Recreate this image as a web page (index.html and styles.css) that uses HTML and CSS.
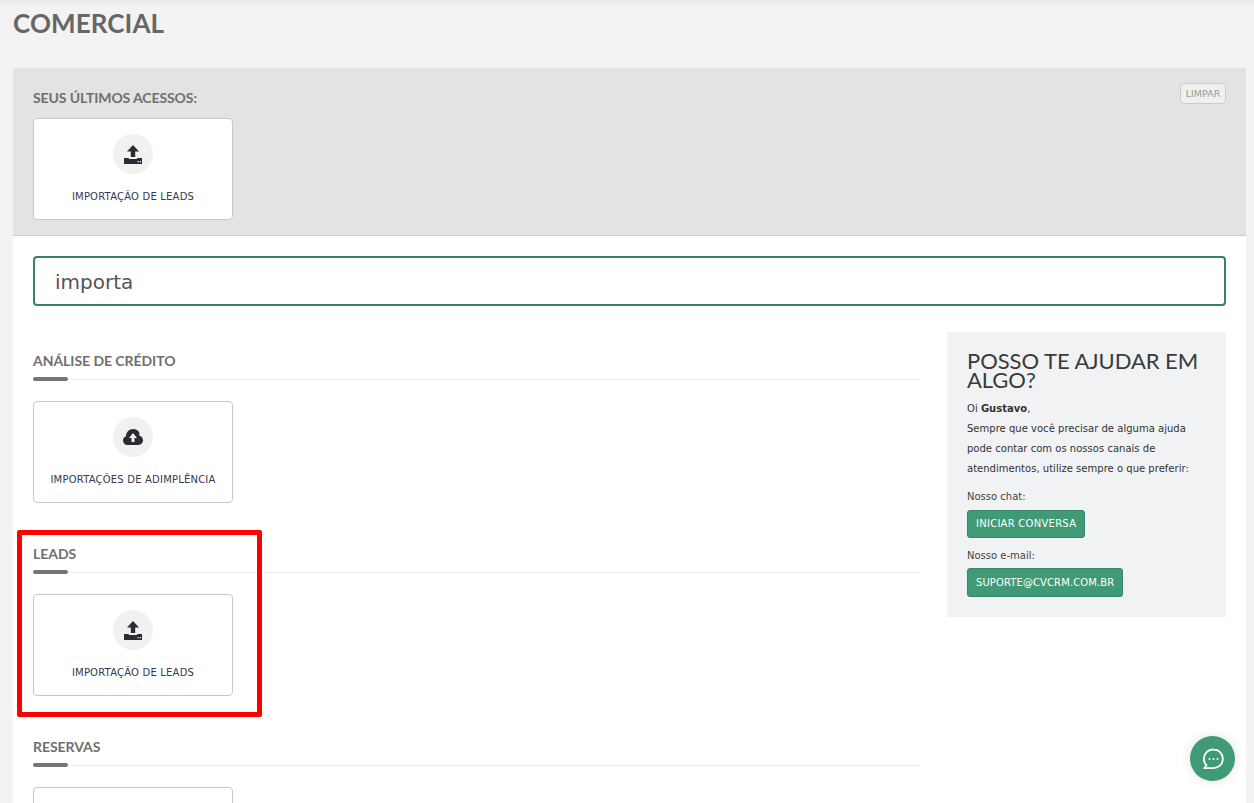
FILE: index.html
```html
<!DOCTYPE html>
<html lang="pt-BR">
<head>
<meta charset="utf-8">
<title>Comercial</title>
<link rel="stylesheet" href="styles.css">
</head>
<body>
<div class="page">
  <h1 class="title">COMERCIAL</h1>
  <main class="panel">
    <section class="recent">
      <div class="recent-head">
        <h2 class="recent-title">SEUS ÚLTIMOS ACESSOS:</h2>
        <button class="clear">LIMPAR</button>
      </div>
      <a class="card">
        <span class="ico"><svg width="20" height="20" viewBox="0 0 20 20"><path class="g" d="M10 1 16 7.500H12.200V13H7.800V7.500H4Z"/><path class="g" fill-rule="evenodd" d="M1 14H5.800V15H14.200V14H19V20H1ZM14.500 17H15.800V18.200H14.500ZM16.700 17H18V18.200H16.700Z"/></svg></span>
        <span class="label">IMPORTAÇÃO DE LEADS</span>
      </a>
    </section>
    <div class="search-wrap">
      <input class="search" type="text" value="importa">
    </div>
    <div class="columns">
      <div class="groups">
        <section class="group">
          <h3 class="group-title">ANÁLISE DE CRÉDITO</h3>
          <div class="rule"></div>
          <a class="card">
            <span class="ico"><svg width="20" height="16" viewBox="0 0 20 16"><path class="g" fill-rule="evenodd" d="M4.500 16C2 16 0 14 0 11.500 0 9.500 1.300 7.800 3 7.200 3 3.200 6.200 0 10.200 0 13 0 15.400 1.600 16.500 4 16.200 5 16.200 5.800 16.200 6.500 18.500 7 20 9 20 11.300 20 13.900 17.900 16 15.300 16ZM10 4 6 9H8.500V13H11.500V9H14Z"/></svg></span>
            <span class="label">IMPORTAÇÕES DE ADIMPLÊNCIA</span>
          </a>
        </section>
        <section class="group">
          <h3 class="group-title">LEADS</h3>
          <div class="rule"></div>
          <a class="card">
            <span class="ico"><svg width="20" height="20" viewBox="0 0 20 20"><path class="g" d="M10 1 16 7.500H12.200V13H7.800V7.500H4Z"/><path class="g" fill-rule="evenodd" d="M1 14H5.800V15H14.200V14H19V20H1ZM14.500 17H15.800V18.200H14.500ZM16.700 17H18V18.200H16.700Z"/></svg></span>
            <span class="label">IMPORTAÇÃO DE LEADS</span>
          </a>
        </section>
        <section class="group">
          <h3 class="group-title">RESERVAS</h3>
          <div class="rule"></div>
          <a class="card"></a>
        </section>
      </div>
      <aside class="help">
        <h2 class="help-title">POSSO TE AJUDAR EM ALGO?</h2>
        <p class="help-text">Oi <b>Gustavo</b>,<br>Sempre que você precisar de alguma ajuda pode contar com os nossos canais de atendimentos, utilize sempre o que preferir:</p>
        <p class="help-label">Nosso chat:</p>
        <a class="btn btn-chat">INICIAR CONVERSA</a>
        <p class="help-label">Nosso e-mail:</p>
        <a class="btn btn-mail">SUPORTE@CVCRM.COM.BR</a>
      </aside>
    </div>
  </main>
</div>
<div class="highlight"></div>
<button class="chat" aria-label="Chat"><svg width="24" height="24" viewBox="0 0 24 24"><path d="M12.500 2.500A9.300 9.300 0 1 1 12.500 21.200H3.200L5.500 18.200A9.300 9.300 0 0 1 12.500 2.500Z" fill="none" stroke="#fff" stroke-width="1.800" stroke-linejoin="round"/><circle cx="8.500" cy="12" r="1" fill="#fff"/><circle cx="12.500" cy="12" r="1" fill="#fff"/><circle cx="16.500" cy="12" r="1" fill="#fff"/></svg></button>
</body>
</html>
```

FILE: styles.css
```css
* { box-sizing: border-box; }
html, body { height: 803px; overflow: hidden; }
body {
  margin: 0;
  background: #f3f3f3;
  font-family: "DejaVu Sans", Verdana, sans-serif;
  color: #333;
}
.page {
  height: 803px;
  overflow: hidden;
  padding: 0 8px 0 13px;
  background: linear-gradient(#ebebeb, #f3f3f3 8px);
}
.title {
  margin: 0;
  height: 68px;
  padding-top: 7px;
  font: 700 26px/32px Lato, sans-serif;
  letter-spacing: .1px;
  color: #666;
}
.panel { background: #fff; }
.recent {
  height: 168px;
  padding: 20px 20px 0;
  background: #e3e3e3;
  border-bottom: 1px solid #ccc;
}
.recent-head {
  display: flex;
  justify-content: space-between;
  align-items: flex-start;
  height: 30px;
}
.recent-title {
  margin: 1px 0 0;
  font: 700 14px/17px Lato, sans-serif;
  letter-spacing: -0.1px;
  color: #6f6f6f;
}
.clear {
  margin-top: -5px;
  width: 46px;
  height: 21px;
  padding: 1px 0 0;
  background: #f0f0f0;
  border: 1px solid #ccc;
  border-radius: 4px;
  font: 400 9.500px/1 "DejaVu Sans", sans-serif;
  color: #999;
}
.card {
  display: flex;
  flex-direction: column;
  align-items: center;
  width: 200px;
  height: 102px;
  padding-top: 15px;
  background: #fff;
  border: 1px solid #c8c8c8;
  border-radius: 4px;
}
.ico {
  display: flex;
  align-items: center;
  justify-content: center;
  width: 40px;
  height: 40px;
  border-radius: 50%;
  background: #f1f1f1;
}
.g { fill: #2b2b33; }
.label {
  margin-top: 17px;
  font-size: 10px;
  letter-spacing: .2px;
  line-height: 12px;
  color: #343a50;
  white-space: nowrap;
}
.search-wrap { padding: 20px 20px 0; }
.search {
  display: block;
  width: 100%;
  height: 50px;
  padding: 2px 20px 0;
  border: 2px solid #3a8068;
  border-radius: 4px;
  background: #fff;
  font: 400 20px "DejaVu Sans", sans-serif;
  color: #555;
  outline: none;
}
.columns {
  display: flex;
  align-items: flex-start;
  padding: 26px 20px 0;
}
.groups { width: 887px; }
.group { height: 193px; padding-top: 20px; }
.group-title {
  margin: 0;
  font: 700 14px/17px Lato, sans-serif;
  letter-spacing: -0.05px;
  color: #6f6f6f;
}
.rule {
  position: relative;
  height: 4px;
  margin: 8px 0 20px;
  background: linear-gradient(#fff 2px, #eee 2px, #eee 3px, #fff 3px);
}
.rule::before {
  content: "";
  position: absolute;
  left: 0;
  top: 0;
  width: 35px;
  height: 4px;
  border-radius: 2px;
  background: #757575;
}
.help {
  width: 279px;
  height: 285px;
  margin-left: 27px;
  padding: 19px 20px 0;
  background: #f1f2f4;
}
.help-title {
  margin: 0;
  font: 400 22px/19px Lato, sans-serif;
  letter-spacing: -0.05px;
  color: #3a3a3a;
}
.help-text {
  margin: 10px 0 0;
  font-size: 10px;
  line-height: 20px;
  letter-spacing: .02px;
  color: #333;
}
.help-label {
  margin: 8px 0 0;
  font-size: 10px;
  line-height: 20px;
  color: #444;
}
.btn {
  display: inline-block;
  height: 28px;
  margin-top: 3px;
  padding: 0 8px;
  background: #3f9a75;
  border: 1px solid #38866a;
  border-radius: 3px;
  font-size: 10px;
  line-height: 26px;
  color: #fff;
  white-space: nowrap;
}
.btn-chat { letter-spacing: .26px; }
.btn-mail { height: 29px; margin-top: 2px; line-height: 27px; letter-spacing: .1px; }
.highlight {
  position: absolute;
  left: 17px;
  top: 530px;
  width: 245px;
  height: 187px;
  border: 5px solid #f00;
  border-radius: 2px;
}
.chat {
  position: absolute;
  left: 1190px;
  top: 736px;
  width: 45px;
  height: 45px;
  padding: 0;
  display: flex;
  align-items: center;
  justify-content: center;
  border: 0;
  border-radius: 50%;
  background: #3f9a75;
  box-shadow: 0 0 12px rgba(0, 0, 0, .12);
}
```
